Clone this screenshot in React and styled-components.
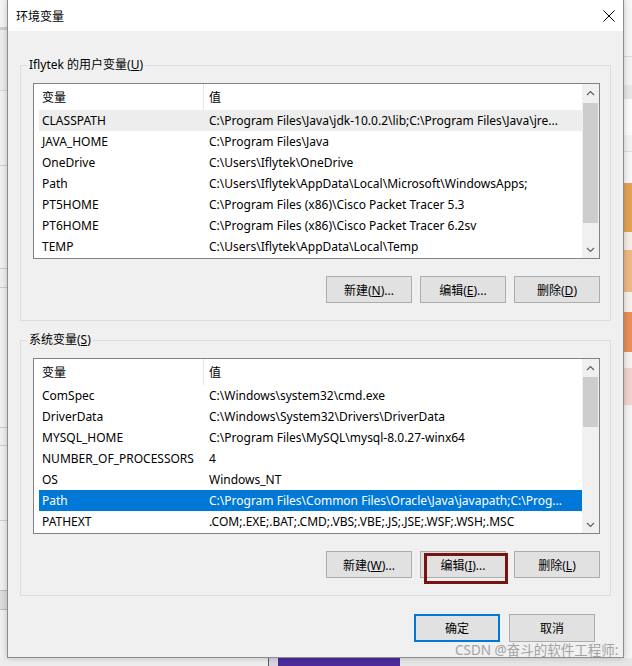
import React from "react";
import styled, { createGlobalStyle } from "styled-components";

const GlobalStyle = createGlobalStyle`
  html, body {
    margin: 0;
    padding: 0;
    background: #ebebeb;
  }

  body {
    font-family: "Noto Sans", "Noto Sans CJK SC", sans-serif;
    font-size: 12px;
    color: #000;
  }
`;

const Desktop = styled.div`
  position: relative;
  width: 632px;
  height: 666px;
  overflow: hidden;
  display: grid;
  grid-template-columns: 7px 617px 8px;
  grid-template-rows: 658px 8px;
  background: #ebebeb;
`;

const Strip = styled.div`
  display: flex;
  flex-direction: column;
  overflow: hidden;
  background: ${(p) => p.$bg};
`;

const BottomStrip = styled.div`
  grid-column: 1 / 4;
  display: flex;
  background: #e4e4e4;
`;

const Band = styled.div`
  flex: ${(p) => (p.$h ? `0 0 ${p.$h}px` : "1")};
  background: ${(p) => p.$c};
`;

const Block = styled.div`
  flex: ${(p) => (p.$w ? `0 0 ${p.$w}px` : "1")};
  background: ${(p) => p.$c};
`;

const Window = styled.div`
  display: flex;
  flex-direction: column;
  box-sizing: border-box;
  background: #f0f0f0;
  border: 1px solid #8c8c8c;
  border-top: none;
  box-shadow: 0 0 6px rgba(0, 0, 0, 0.22);
  z-index: 1;
`;

const TitleBar = styled.div`
  height: 31px;
  flex: 0 0 31px;
  display: flex;
  align-items: center;
  justify-content: space-between;
  padding: 0 8px;
  background: #fff;
`;

const Title = styled.span`
  font-size: 12px;
`;

const Body = styled.div`
  display: flex;
  flex-direction: column;
  padding: 26px 12px 15px 12px;
`;

const Group = styled.fieldset`
  margin: 0;
  min-width: 0;
  border: 1px solid #dcdcdc;
  padding: 10px 10px 17px 12px;

  & + & {
    margin-top: 11px;
  }
`;

const Legend = styled.legend`
  margin-left: -6px;
  padding: 0 2px;
  line-height: 16px;
  font-size: 12px;
`;

const ListView = styled.div`
  display: flex;
  height: 176px;
  box-sizing: border-box;
  border: 1px solid #828282;
  background: #fff;
`;

const ListContent = styled.div`
  flex: 1;
  min-width: 0;
  display: flex;
  flex-direction: column;
  padding-left: 5px;
`;

const HeaderRow = styled.div`
  display: flex;
  height: 26px;
  flex: 0 0 26px;
`;

const Row = styled.div`
  display: flex;
  align-items: center;
  height: 21px;
  flex: 0 0 21px;
  background: ${(p) => (p.$sel === "focus" ? "#0078d7" : p.$sel === "dim" ? "#ededed" : "transparent")};
  color: ${(p) => (p.$sel === "focus" ? "#fff" : "#000")};
`;

const NameCell = styled.div`
  display: flex;
  align-items: center;
  width: 164px;
  flex: 0 0 164px;
  box-sizing: border-box;
  padding-left: 3px;
  white-space: nowrap;
  overflow: hidden;
`;

const ValueCell = styled.div`
  display: flex;
  align-items: center;
  flex: 1;
  min-width: 0;
  padding-left: ${(p) => (p.$head ? 5 : 6)}px;
  border-left: ${(p) => (p.$head ? "1px solid #e5e5e5" : "none")};
  white-space: nowrap;
  overflow: hidden;
`;

const ScrollBar = styled.div`
  width: 17px;
  flex: 0 0 17px;
  display: flex;
  flex-direction: column;
  background: #f0f0f0;
`;

const ArrowBox = styled.div`
  height: 17px;
  flex: 0 0 17px;
  display: flex;
  align-items: center;
  justify-content: center;
`;

const Track = styled.div`
  flex: 1;
  display: flex;
  flex-direction: column;
`;

const Thumb = styled.div`
  margin: ${(p) => p.$top}px 1px 0 1px;
  height: ${(p) => p.$h}px;
  background: #cdcdcd;
`;

const ButtonRow = styled.div`
  display: flex;
  justify-content: flex-end;
  gap: 8px;
  margin-top: 17px;
`;

const Footer = styled.div`
  display: flex;
  justify-content: flex-end;
  gap: 9px;
  margin-top: 18px;
  padding-right: 16px;
`;

const Button = styled.button`
  position: relative;
  width: 86px;
  height: ${(p) => (p.$tall ? 28 : 27)}px;
  box-sizing: border-box;
  margin: 0;
  padding: 0;
  background: #e1e1e1;
  border: ${(p) => (p.$primary ? "2px solid #0078d7" : "1px solid #adadad")};
  font-family: inherit;
  font-size: 12px;
  color: #000;
`;

const Highlight = styled.span`
  position: absolute;
  left: 3px;
  top: 1px;
  width: 84px;
  height: 31px;
  box-sizing: border-box;
  border: 3px solid #7a1212;
  pointer-events: none;
`;

const Watermark = styled.div`
  position: absolute;
  left: 455px;
  top: 641px;
  z-index: 2;
  font-family: "Noto Sans", "Noto Sans CJK SC", sans-serif;
  font-size: 13.5px;
  line-height: 18px;
  color: #a3a3a3;
  white-space: nowrap;
`;

const Chevron = ({ up }) => (
  <svg width="9" height="6" viewBox="0 0 9 6">
    <polyline
      points={up ? "1,5 4.5,1.5 8,5" : "1,1 4.5,4.5 8,1"}
      fill="none"
      stroke="#606060"
      strokeWidth="1.2"
    />
  </svg>
);

const CloseIcon = () => (
  <svg width="12" height="12" viewBox="0 0 12 12">
    <path d="M0.5 0.5 L11.5 11.5 M11.5 0.5 L0.5 11.5" stroke="#000" strokeWidth="1" />
  </svg>
);

const userVars = [
  ["CLASSPATH", "C:\\Program Files\\Java\\jdk-10.0.2\\lib;C:\\Program Files\\Java\\jre...", "dim"],
  ["JAVA_HOME", "C:\\Program Files\\Java"],
  ["OneDrive", "C:\\Users\\Iflytek\\OneDrive"],
  ["Path", "C:\\Users\\Iflytek\\AppData\\Local\\Microsoft\\WindowsApps;"],
  ["PT5HOME", "C:\\Program Files (x86)\\Cisco Packet Tracer 5.3"],
  ["PT6HOME", "C:\\Program Files (x86)\\Cisco Packet Tracer 6.2sv"],
  ["TEMP", "C:\\Users\\Iflytek\\AppData\\Local\\Temp"],
];

const systemVars = [
  ["ComSpec", "C:\\Windows\\system32\\cmd.exe"],
  ["DriverData", "C:\\Windows\\System32\\Drivers\\DriverData"],
  ["MYSQL_HOME", "C:\\Program Files\\MySQL\\mysql-8.0.27-winx64"],
  ["NUMBER_OF_PROCESSORS", "4"],
  ["OS", "Windows_NT"],
  ["Path", "C:\\Program Files\\Common Files\\Oracle\\Java\\javapath;C:\\Prog...", "focus"],
  ["PATHEXT", ".COM;.EXE;.BAT;.CMD;.VBS;.VBE;.JS;.JSE;.WSF;.WSH;.MSC"],
];

const leftBands = [
  [27, "#f4f4f4"], [3, "#cfcfcf"], [60, "#ececec"], [1, "#d6d6d6"], [74, "#f0f0f0"],
  [1, "#cccccc"], [102, "#f0f0f0"], [1, "#cccccc"], [18, "#eeeeee"], [1, "#cccccc"],
  [139, "#f0f0f0"], [1, "#cccccc"], [17, "#efefef"], [1, "#cccccc"], [74, "#f0f0f0"],
  [1, "#cccccc"], [69, "#f0f0f0"], [1, "#bdbdbd"], [18, "#dcdcdc"], [1, "#bdbdbd"],
  [0, "#f0f0f0"],
];

const rightBands = [
  [56, "#f6f6f6"], [1, "#d9d9d9"], [28, "#f3f3f3"], [14, "#e6e6e6"], [36, "#fbfbfb"],
  [16, "#f2f2f2"], [1, "#dddddd"], [31, "#f7f7f7"], [49, "#e2a254"], [18, "#f6eee4"],
  [42, "#efb784"], [20, "#f6f0ea"], [40, "#e88f59"], [16, "#f7f1ee"], [37, "#f1d3cd"],
  [0, "#f4f4f4"],
];

const VarList = ({ rows, thumbTop, thumbH }) => (
  <ListView>
    <ListContent>
      <HeaderRow>
        <NameCell>变量</NameCell>
        <ValueCell $head>值</ValueCell>
      </HeaderRow>
      {rows.map(([name, value, sel]) => (
        <Row key={name + value} $sel={sel}>
          <NameCell>{name}</NameCell>
          <ValueCell>{value}</ValueCell>
        </Row>
      ))}
    </ListContent>
    <ScrollBar>
      <ArrowBox>
        <Chevron up />
      </ArrowBox>
      <Track>
        <Thumb $top={thumbTop} $h={thumbH} />
      </Track>
      <ArrowBox>
        <Chevron />
      </ArrowBox>
    </ScrollBar>
  </ListView>
);

const Key = ({ children }) => <u>{children}</u>;

export default function App() {
  return (
    <>
      <GlobalStyle />
      <Desktop>
        <Strip $bg="#f0f0f0">
          {leftBands.map(([h, c], i) => (
            <Band key={i} $h={h} $c={c} />
          ))}
        </Strip>

        <Window>
          <TitleBar>
            <Title>环境变量</Title>
            <CloseIcon />
          </TitleBar>
          <Body>
            <Group>
              <Legend>
                Iflytek 的用户变量(<Key>U</Key>)
              </Legend>
              <VarList rows={userVars} thumbTop={2} thumbH={120} />
              <ButtonRow>
                <Button>
                  新建(<Key>N</Key>)...
                </Button>
                <Button>
                  编辑(<Key>E</Key>)...
                </Button>
                <Button>
                  删除(<Key>D</Key>)
                </Button>
              </ButtonRow>
            </Group>

            <Group>
              <Legend>
                系统变量(<Key>S</Key>)
              </Legend>
              <VarList rows={systemVars} thumbTop={1} thumbH={50} />
              <ButtonRow>
                <Button>
                  新建(<Key>W</Key>)...
                </Button>
                <Button>
                  编辑(<Key>I</Key>)...
                  <Highlight />
                </Button>
                <Button>
                  删除(<Key>L</Key>)
                </Button>
              </ButtonRow>
            </Group>

            <Footer>
              <Button $tall $primary>
                确定
              </Button>
              <Button $tall>取消</Button>
            </Footer>
          </Body>
        </Window>

        <Strip $bg="#f4f4f4">
          {rightBands.map(([h, c], i) => (
            <Band key={i} $h={h} $c={c} />
          ))}
        </Strip>

        <BottomStrip>
          <Block $w={268} $c="#ededed" />
          <Block $w={1} $c="#5a5a5a" />
          <Block $w={9} $c="#d9d2e6" />
          <Block $w={122} $c="#4b2b9b" />
          <Block $c="#e6e6e6" />
        </BottomStrip>

        <Watermark>CSDN @奋斗的软件工程师:</Watermark>
      </Desktop>
    </>
  );
}
